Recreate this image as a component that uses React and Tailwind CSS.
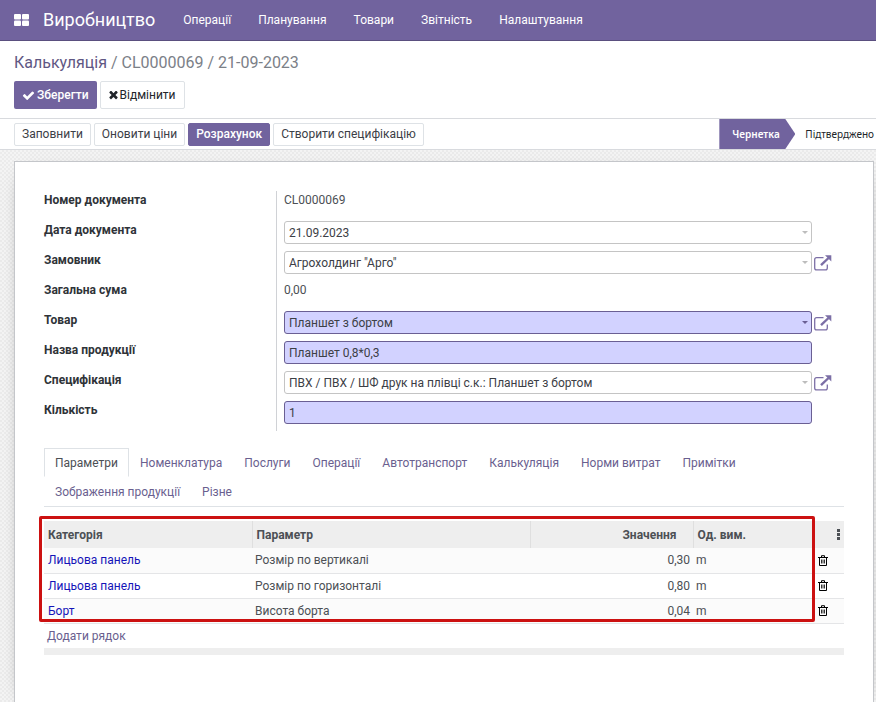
import React from "react";

const MENU = ["Операції", "Планування", "Товари", "Звітність", "Налаштування"];

const TABS = [
  "Параметри",
  "Номенклатура",
  "Послуги",
  "Операції",
  "Автотранспорт",
  "Калькуляція",
  "Норми витрат",
  "Примітки",
  "Зображення продукції",
  "Різне",
];

const FIELDS = [
  { id: "number", label: "Номер документа", value: "CL0000069", kind: "static" },
  { id: "date", label: "Дата документа", value: "21.09.2023", kind: "date" },
  { id: "customer", label: "Замовник", value: "Агрохолдинг \"Арго\"", kind: "select" },
  { id: "total", label: "Загальна сума", value: "0,00", kind: "static" },
  { id: "product", label: "Товар", value: "Планшет з бортом", kind: "select", required: true },
  { id: "name", label: "Назва продукції", value: "Планшет 0,8*0,3", kind: "text", required: true },
  { id: "spec", label: "Специфікація", value: "ПВХ / ПВХ / ШФ друк на плівці с.к.: Планшет з бортом", kind: "select" },
  { id: "qty", label: "Кількість", value: "1", kind: "text", required: true },
];

const ROWS = [
  ["Лицьова панель", "Розмір по вертикалі", "0,30", "m"],
  ["Лицьова панель", "Розмір по горизонталі", "0,80", "m"],
  ["Борт", "Висота борта", "0,04", "m"],
];

function AppsIcon() {
  return (
    <svg viewBox="0 0 15 12" className="h-3 w-[15px]" fill="currentColor" aria-hidden="true">
      <rect x="0" y="0" width="7" height="5.5" rx="1" />
      <rect x="8" y="0" width="7" height="5.5" rx="1" />
      <rect x="0" y="6.5" width="7" height="5.5" rx="1" />
      <rect x="8" y="6.5" width="7" height="5.5" rx="1" />
    </svg>
  );
}

function CheckIcon() {
  return (
    <svg viewBox="0 0 1792 1792" className="size-[13px]" fill="currentColor" aria-hidden="true">
      <path d="M1671 566q0 40-28 68l-724 724-136 136q-28 28-68 28t-68-28l-136-136-362-362q-28-28-28-68t28-68l136-136q28-28 68-28t68 28l294 295 656-657q28-28 68-28t68 28l136 136q28 28 28 68z" />
    </svg>
  );
}

function TimesIcon() {
  return (
    <svg viewBox="250 250 1290 1400" className="h-2.5 w-[9px]" fill="currentColor" aria-hidden="true">
      <path d="M1490 1322q0 40-28 68l-136 136q-28 28-68 28t-68-28l-294-294-294 294q-28 28-68 28t-68-28l-136-136q-28-28-28-68t28-68l294-294-294-294q-28-28-28-68t28-68l136-136q28-28 68-28t68 28l294 294 294-294q28-28 68-28t68 28l136 136q28 28 28 68t-28 68l-294 294 294 294q28 28 28 68z" />
    </svg>
  );
}

function ExternalIcon() {
  return (
    <svg viewBox="0 0 18 16" className="h-4 w-[18px]" fill="none" stroke="currentColor" aria-hidden="true">
      <path d="M9.5 2.7H2.6Q.7 2.7.7 4.6v8.4q0 1.9 1.9 1.9h8.8q1.9 0 1.9-1.9V9.5" strokeWidth="1.3" />
      <path d="M7 10.2 14.5 3" strokeWidth="2.4" />
      <path d="M11 .3h6.3v6.2z" fill="currentColor" stroke="none" />
    </svg>
  );
}

function TrashIcon() {
  return (
    <svg viewBox="0 0 10 11" className="h-[11px] w-2.5" fill="none" stroke="currentColor" aria-hidden="true">
      <path d="M0 2.5h10M3.5 2V.7h3V2M1.5 2.5v8h7v-8" />
      <path d="M3.5 4.5v4M5 4.5v4M6.5 4.5v4" strokeWidth=".8" />
    </svg>
  );
}

function Field({ field }) {
  const { id, label, value, kind, required } = field;
  const tone = required
    ? "border-[#6a5f93] bg-[#d2d2ff]"
    : "border-[#c4c4c4] bg-white";
  const box = `block h-[23px] w-full appearance-none rounded-[3px] border px-1 text-[12px] leading-4 text-[#3c4046] outline-none ${tone}`;
  return (
    <div className="flex h-[30px]">
      <label htmlFor={id} className="w-[232px] shrink-0 pt-px text-[12px] leading-4 font-bold text-[#2f3338]">
        {label}
      </label>
      <div className="flex min-w-0 grow border-l border-[#d0d2d6] pl-[7px]">
        {kind === "static" ? (
          <output id={id} className="pt-px text-[12px] leading-4 text-[#4c5055]">{value}</output>
        ) : (
          <>
            <div className="relative grow">
              {kind === "select" ? (
                <select id={id} className={box} defaultValue={value}>
                  <option>{value}</option>
                </select>
              ) : (
                <input id={id} type="text" className={box} defaultValue={value} />
              )}
              {kind !== "text" && (
                <span
                  className={`pointer-events-none absolute top-2.5 right-1 border-x-3 border-t-3 border-x-transparent ${
                    required ? "border-t-[#6a5f93]" : "border-t-[#bdbdbd]"
                  }`}
                />
              )}
            </div>
            <div className="w-8 shrink-0 pt-1 pl-0.5">
              {kind === "select" && (
                <button type="button" aria-label={`Відкрити: ${label}`} className="block text-[#7c6fa6]">
                  <ExternalIcon />
                </button>
              )}
            </div>
          </>
        )}
      </div>
    </div>
  );
}

function ActionButton({ children, primary }) {
  return (
    <button
      type="button"
      className={`h-[23px] rounded-[2px] border px-[7px] text-[12px] leading-4 ${
        primary
          ? "border-[#71639e] bg-[#71639e] font-medium text-white"
          : "border-[#dee2e6] bg-white text-[#3c4046]"
      }`}
    >
      {children}
    </button>
  );
}

export default function App() {
  return (
    <div className="flex h-screen flex-col overflow-hidden bg-white font-[Roboto,'Noto_Sans',sans-serif] text-[12px] text-[#4c5055]">
      <header className="flex h-[41px] shrink-0 items-center border-b border-[#5a4f7f] bg-[#71639e] pl-3.5 text-white">
        <button type="button" aria-label="Застосунки">
          <AppsIcon />
        </button>
        <a href="#home" className="ml-3.5 text-[18px] leading-6">Виробництво</a>
        <nav className="ml-7 flex gap-[27px] text-[12px] leading-4">
          {MENU.map((item) => (
            <a key={item} href="#menu">{item}</a>
          ))}
        </nav>
      </header>

      <div className="shrink-0 border-b border-[#d8dade] px-3.5 pt-2.5 pb-[9px]">
        <h1 className="text-[16px] leading-6 text-[#7b8087]">
          <a href="#list" className="text-[#5f5783]">Калькуляція</a> / CL0000069 / 21-09-2023
        </h1>
        <div className="mt-1.5 flex gap-[3px]">
          <button type="button" className="flex h-7 items-center gap-0.5 rounded-[2px] bg-[#71639e] px-2 text-[12px] font-medium text-white">
            <CheckIcon />
            Зберегти
          </button>
          <button type="button" className="flex h-7 items-center gap-0.5 rounded-[2px] border border-[#dee2e6] px-2 text-[12px] text-[#212529]">
            <TimesIcon />
            Відмінити
          </button>
        </div>
      </div>

      <div className="flex h-[31px] shrink-0 justify-between border-b border-[#d8dade] pl-3.5">
        <div className="flex items-center gap-[3px]">
          <ActionButton>Заповнити</ActionButton>
          <ActionButton>Оновити ціни</ActionButton>
          <ActionButton primary>Розрахунок</ActionButton>
          <ActionButton>Створити специфікацію</ActionButton>
        </div>
        <div className="flex font-['Noto_Sans',sans-serif] text-[10px] leading-[30px]">
          <span className="w-[76px] bg-[#71639e] pl-[13px] font-semibold text-white [clip-path:polygon(0_0,66px_0,100%_50%,66px_100%,0_100%)]">
            Чернетка
          </span>
          <span className="pr-0.5 pl-2.5 text-[#212529]">Підтверджено</span>
        </div>
      </div>

      <div className="flex grow flex-col bg-[#f0f0f0] bg-[repeating-conic-gradient(#ebebeb_0_25%,#f4f4f4_0_50%)] bg-size-[4px_4px] pt-[11px] pr-0.5 pl-3.5">
        <main className="grow border border-b-0 border-[#c4c6ca] bg-white px-[29px] pt-[29px] shadow-[0_5px_20px_-15px_#000]">
          <form>
            {FIELDS.map((f) => (
              <Field key={f.id} field={f} />
            ))}
          </form>

          <div role="tablist" className="mt-[17px] flex flex-wrap border-b border-[#dee2e6]">
            {TABS.map((tab, i) => (
              <button
                key={tab}
                type="button"
                role="tab"
                aria-selected={i === 0}
                className={`h-[29px] border px-2.5 text-[12px] leading-4 ${
                  i === 0
                    ? "border-[#dee2e6] border-b-transparent text-[#4c5055]"
                    : "border-transparent text-[#6a5f8f]"
                }`}
              >
                {tab}
              </button>
            ))}
          </div>

          <div className="relative mt-3.5">
            <table className="w-full table-fixed border-collapse text-[12px] leading-4">
              <colgroup>
                <col className="w-[208px]" />
                <col />
                <col className="w-[163px]" />
                <col className="w-[121px]" />
                <col className="w-[30px]" />
              </colgroup>
              <thead>
                <tr className="h-[27px] bg-[#eee] text-left text-[12px] text-[#4c5055]">
                  <th className="border-r border-[#dfdfdf] px-1 font-bold">Категорія</th>
                  <th className="border-r border-[#dfdfdf] px-1 font-bold">Параметр</th>
                  <th className="border-r border-[#dfdfdf] pr-4 text-right font-bold">Значення</th>
                  <th className="px-1 font-bold">Од. вим.</th>
                  <th className="pr-1">
                    <button type="button" aria-label="Стовпці" className="ml-auto flex flex-col gap-px">
                      <span className="block size-[3px] bg-[#4c5055]" />
                      <span className="block size-[3px] bg-[#4c5055]" />
                      <span className="block size-[3px] bg-[#4c5055]" />
                    </button>
                  </th>
                </tr>
              </thead>
              <tbody>
                {ROWS.map(([category, name, amount, unit], i) => (
                  <tr key={i} className="h-[25px] border-b border-[#e4e5e7] odd:bg-[#fbfbfb]">
                    <td className="px-1 text-[#1414b8]">{category}</td>
                    <td className="px-[3px]">{name}</td>
                    <td className="px-[3px] text-right">{amount}</td>
                    <td className="px-[3px]">{unit}</td>
                    <td>
                      <button type="button" aria-label="Видалити рядок" className="ml-1 block text-black">
                        <TrashIcon />
                      </button>
                    </td>
                  </tr>
                ))}
                <tr className="h-[25px]">
                  <td colSpan={5} className="px-[3px]">
                    <a href="#add" className="text-[#6a5f8f]">Додати рядок</a>
                  </td>
                </tr>
              </tbody>
              <tfoot>
                <tr className="h-[7px] bg-[#eee]">
                  <td colSpan={5} />
                </tr>
              </tfoot>
            </table>
            <div className="pointer-events-none absolute -top-[5px] right-[29px] -left-[5px] h-[106px] rounded-[2px] border-3 border-[#cc1111]" />
          </div>
        </main>
      </div>
    </div>
  );
}
